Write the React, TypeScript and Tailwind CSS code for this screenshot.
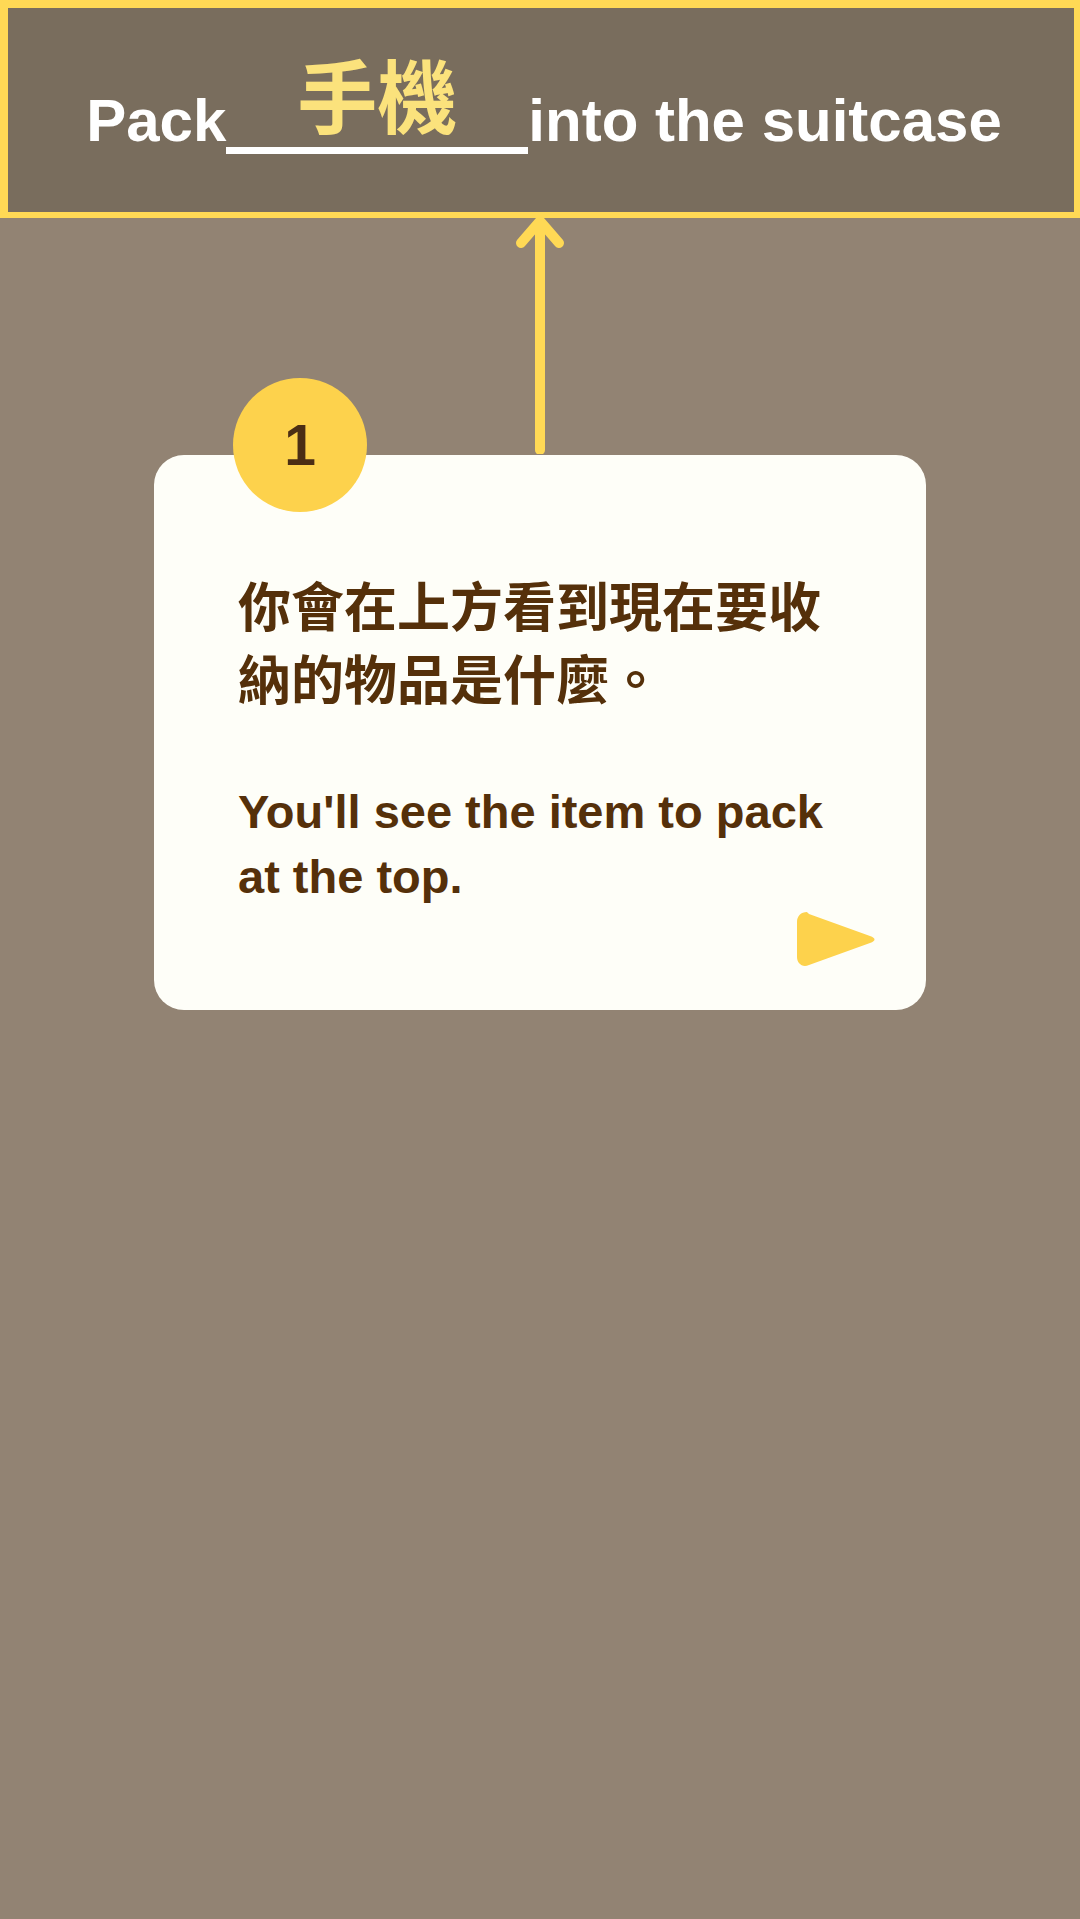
import React from "react";

const sans = { fontFamily: '"Liberation Sans", "Noto Sans CJK TC", Arial, sans-serif' };
const cjk = { fontFamily: '"Liberation Sans", "Noto Sans CJK TC", sans-serif' };

export default function App() {
  return (
    <div className="w-[1080px] min-h-[1919px] bg-[#928373] flex flex-col" style={sans}>
      {/* Top bar */}
      <div className="box-border h-[218px] w-full bg-[#796d5d] border-t-8 border-l-8 border-r-[6px] border-b-[6px] border-[#ffd955] flex flex-col items-center pt-[83px] pl-[6px]">
        <div className="text-[60px] leading-[60px] font-bold text-white whitespace-nowrap">
          <span>Pack</span>
          <span className="relative inline-block w-[302px] h-[1px]">
            <span className="absolute left-0 right-0 top-[7px] h-[7px] bg-white" />
            <span
              className="absolute left-0 right-0 bottom-[1px] text-center text-[80px] leading-[80px] font-bold text-[#fbe27c]"
              style={cjk}
            >
              手機
            </span>
          </span>
          <span>into the suitcase</span>
        </div>
      </div>

      {/* Arrow */}
      <div className="h-[237px] flex justify-center">
        <svg width="60" height="237" viewBox="0 0 60 237" className="-mt-[1px]">
          <path
            d="M30 4 L30 233 M11 26 L30 4 L49 26"
            stroke="#ffd955"
            strokeWidth="10"
            strokeLinecap="round"
            strokeLinejoin="round"
            fill="none"
          />
        </svg>
      </div>

      {/* Card */}
      <div className="relative ml-[154px] w-[772px] h-[555px] bg-[#fefef8] rounded-[30px] pt-[117px] flex flex-col">
        <div className="absolute left-[79px] -top-[77px] w-[134px] h-[134px] rounded-full bg-[#fdd24c] flex items-center justify-center">
          <span className="text-[57px] leading-none font-bold text-[#4b2e14]">1</span>
        </div>
        <div className="pl-[84px] pr-[86px]">
          <p className="text-[53px] leading-[73px] font-bold text-[#55300a]" style={cjk}>
            你會在上方看到現在要收納的物品是什麼。
          </p>
          <p className="mt-[61px] text-[47px] leading-[65px] font-bold text-[#55300a]">
            You'll see the item to pack at the top.
          </p>
        </div>
        <div className="flex justify-end pr-[51px] mt-[3px]">
          <svg width="78" height="55" viewBox="0 0 78 55">
            <path
              d="M10 0 C4 0 0 4 0 10 L0 45 C0 51 5 56 12 53 L73 31 C79 29 79 26 73 24 L12 2 C11 1 10 0 10 0 Z"
              fill="#fdd24c"
            />
          </svg>
        </div>
      </div>
    </div>
  );
}
